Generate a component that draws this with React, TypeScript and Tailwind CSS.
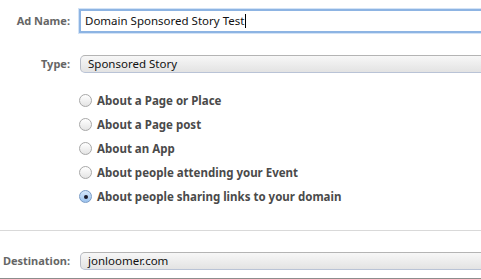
import React from "react";

const font = { fontFamily: '"Noto Sans", "DejaVu Sans", sans-serif' };

function Radio({ checked }: { checked?: boolean }) {
  return (
    <span
      className={
        "flex h-[13px] w-[13px] shrink-0 items-center justify-center rounded-full border " +
        (checked
          ? "border-[#7a9cc6] bg-gradient-to-b from-[#d4e6fa] to-[#9cc3ee]"
          : "border-[#a8a8a8] bg-gradient-to-b from-[#ffffff] to-[#e4e4e4]")
      }
    >
      {checked && <span className="h-[4px] w-[4px] rounded-full bg-[#1a1a2a]" />}
    </span>
  );
}

function Select({ value }: { value: string }) {
  return (
    <div className="flex h-[18px] flex-1 items-center rounded-l-[5px] border-t border-b border-l border-t-[#b4b4b4] border-b-[#b9c3d6] border-l-[#b8bcc6] bg-gradient-to-b from-[#f7f7f7] to-[#e3e3e3] pl-[7px] text-[11.5px] text-[#111]">
      {value}
    </div>
  );
}

export default function App() {
  const options = [
    "About a Page or Place",
    "About a Page post",
    "About an App",
    "About people attending your Event",
    "About people sharing links to your domain",
  ];
  return (
    <div className="h-[279px] w-[481px] overflow-hidden bg-white" style={font}>
      <div className="flex items-center pt-[9px]">
        <div className="w-[70px] shrink-0 text-right text-[11px] font-bold text-[#666]">Ad Name:</div>
        <div className="ml-[9px] flex h-[24px] flex-1 items-center border-y-2 border-l-2 border-[#8db4e3] bg-white pl-[4px] text-[11.5px] text-[#111] shadow-[0_0_0_1px_#d3e3f6]">
          Domain Sponsored Story Test<span className="ml-[1px] inline-block h-[14px] w-[1px] bg-black" />
        </div>
      </div>
      <div className="mt-[22px] flex items-center">
        <div className="w-[70px] shrink-0 text-right text-[11px] font-bold text-[#666]">Type:</div>
        <div className="ml-[10px] flex flex-1">
          <Select value="Sponsored Story" />
        </div>
      </div>
      <div className="mt-[21px] flex flex-col gap-[11px] pl-[79px]">
        {options.map((o, i) => (
          <div key={o} className="flex h-[13px] items-center gap-[5px]">
            <Radio checked={i === 4} />
            <span className="text-[11.5px] font-bold text-[#4a4a4a]">{o}</span>
          </div>
        ))}
      </div>
      <div className="mt-[27px] h-px w-full bg-[#d9d9d9]" />
      <div className="mt-[21px] flex items-center">
        <div className="w-[70px] shrink-0 text-right text-[11px] font-bold text-[#666]">Destination:</div>
        <div className="ml-[10px] flex flex-1">
          <Select value="jonloomer.com" />
        </div>
      </div>
      <div className="mt-[8px] h-px w-full bg-[#8c8c8c]" />
    </div>
  );
}
